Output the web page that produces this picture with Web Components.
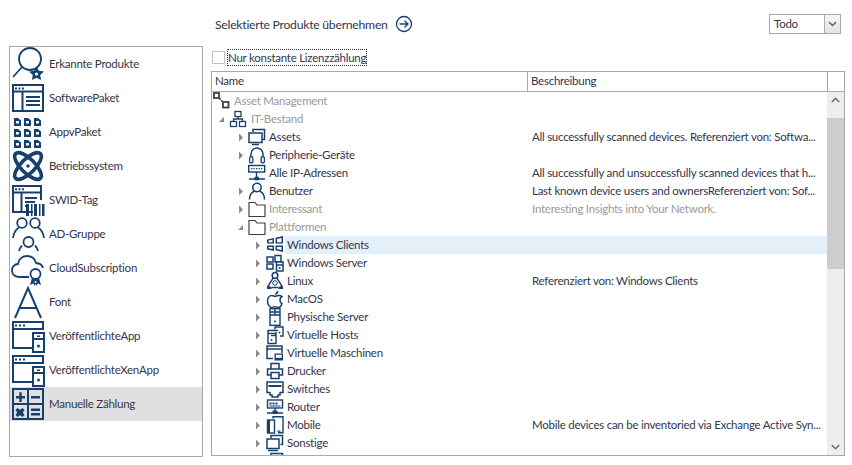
<!DOCTYPE html>
<html lang="de"><head><meta charset="utf-8"><title>Produkte</title>
<style>
html,body{margin:0;padding:0;background:#fff}
body{font:11.500px Lato,"Noto Sans",sans-serif;letter-spacing:-.25px;color:#33364a;width:852px;height:465px;overflow:hidden}
</style></head><body>
<x-app></x-app>
<script>
const s='fill="none" stroke="#17406e"';
const ICONS={
finder:`<g ${s} stroke-width="1.800"><circle cx="19" cy="12" r="11"/><path d="M11 20L2 30"/></g><path d="M25.500 19l2.300 4.700 5.200.7-3.800 3.600.9 5.100-4.600-2.400-4.600 2.400.9-5.100-3.800-3.600 5.200-.7z" fill="#17406e"/><circle cx="25.500" cy="27" r="1.600" fill="#fff"/>`,
pkg:`<g ${s} stroke-width="2"><rect x="2" y="4" width="30" height="26"/><path d="M2 10.500h30M11.500 10.500V30M15 16h14M15 20h14M15 24h14"/></g><path d="M4 6.500h2v2H4zM7.500 6.500h2v2h-2zM11 6.500h2v2h-2z" fill="#17406e"/>`,
appv:[3,13,23].map(x=>[3,14,25].map(y=>`<path d="M${x} ${y}h4l3 2.500v5.500h-7z" fill="#17406e"/><rect x="${x+2}" y="${y+3}" width="3" height="2.500" fill="#fff"/>`).join('')).join(''),
atom:`<g ${s} stroke-width="3.600"><ellipse cx="17" cy="17" rx="17.500" ry="7" transform="rotate(45 17 17)"/><ellipse cx="17" cy="17" rx="17.500" ry="7" transform="rotate(-45 17 17)"/></g><circle cx="17" cy="17" r="1.800" fill="#17406e"/>`,
swid:`<g ${s} stroke-width="2"><path d="M22 29H2V3h28v14M2 9.500h28M10.500 9.500V29M14 15h12M14 19h10M14 23h4"/></g><path d="M4 5.300h2v2H4zM7.500 5.300h2v2h-2zM11 5.300h2v2h-2z" fill="#17406e"/><path d="M15 21h3v12h-3zM20 21h1.500v12H20zM23 21h3v12h-3zM28 21h1.500v12H28zM31 21h2.500v12H31z" fill="#17406e"/>`,
group:`<g ${s} stroke-width="1.800"><circle cx="11" cy="6" r="4.800"/><circle cx="24" cy="6" r="4.800"/><circle cx="17.500" cy="25" r="5"/><path d="M2 21c.5-5 3-8.500 6-10.500M33 21c-.5-5-3-8.500-6-10.500M8 34c.5-2 1.500-4 3-5.500M27 34c-.5-2-1.500-4-3-5.500"/></g>`,
cloud:`<g ${s} stroke-width="1.800"><path d="M18 26H8C3 26 1 22.500 1 19.500 1 16 3.500 13 7 13c.8-5.500 5-8 9-8 5 0 8 3 9 7 4 .3 6.500 2.500 7 5"/><circle cx="24.500" cy="23" r="5"/></g><path d="M21 27l-2 7 3-1.500 2 2.500.5-3 .5 3 2-2.500 3 1.500-2-7z" fill="#17406e"/><circle cx="24.500" cy="31" r="1" fill="#fff"/>`,
font:`<path d="M4 33L17 3l13 30M9 23h16" ${s} stroke-width="2"/>`,
pub:`<g ${s} stroke-width="2"><path d="M22 29H2V3h30v8M2 10h30"/><rect x="22" y="14" width="11" height="19"/><path d="M22 20h11"/></g><path d="M4 5.500h2v2H4zM8 5.500h2v2H8zM12 5.500h2v2h-2z" fill="#17406e"/><circle cx="27.500" cy="27" r="1.500" fill="#17406e"/><path d="M26 16.500h3v1.500h-3z" fill="#17406e"/>`,
calc:`<g ${s} stroke-width="2"><rect x="2" y="2" width="30" height="30"/><path d="M17 2v30M2 17h30"/></g><path d="M5 9h9v2.400H5zM8.300 5.200h2.400v9.900H8.300zM20 9h9v2.400h-9zM20 21.500h9v2.400h-9zM20 26h9v2.400h-9z" fill="#17406e"/><path d="M6 21l2.500 1.700L11 21l2 2-1.700 2.500L13 28l-2 2-2.500-1.700L6 30l-2-2 1.700-2.500L4 23z" fill="#17406e" transform="translate(.5 0)"/>`,
net:`<g fill="none" stroke="#3f3f46" stroke-width="1.800"><rect x="2" y="1" width="5" height="5"/><rect x="11" y="10" width="5.500" height="5.500"/><path d="M7.500 6.500l3.500 3.500" stroke-dasharray="1.500 1"/></g>`,
tree:`<g ${s} stroke-width="1.300"><rect x="6" y="1.500" width="6" height="5"/><rect x="1.500" y="11.500" width="6" height="5"/><rect x="10.500" y="11.500" width="6" height="5"/><path d="M9 6.500v2.500M4.500 11.500V9h9v2.500"/></g>`,
assets:`<g ${s} stroke-width="1.500"><path d="M5 4V1.500h11.500v10H14"/><rect x="1" y="5" width="13" height="9.500"/><path d="M4 16.500h7"/></g>`,
head:`<g ${s}><path d="M3 10V8a6 6 0 0 1 12 0v2" stroke-width="1.500"/></g><rect x="1" y="10" width="4.500" height="7.500" rx="1.800" fill="#17406e"/><rect x="12.500" y="10" width="4.500" height="7.500" rx="1.800" fill="#17406e"/><rect x="2.300" y="11.500" width="1.900" height="4.500" fill="#fff"/><rect x="13.800" y="11.500" width="1.900" height="4.500" fill="#fff"/>`,
ip:`<g ${s} stroke-width="1.400"><rect x=".7" y="1.500" width="16" height="6.500"/><path d="M8.500 8v6M1 15h16"/></g><rect x="6.500" y="12.800" width="4.500" height="3.500" fill="#17406e"/><path d="M3 4h1.300v1.200H3zM5.500 4h1.300v1.200H5.500zM8 4h1.300v1.200H8zM10.500 4h1.300v1.200h-1.300zM13 4h1.300v1.200H13z" fill="#17406e"/>`,
user:`<g ${s} stroke-width="1.500"><circle cx="9" cy="5.500" r="4.200"/><path d="M1.500 17.500c0-4.500 2.500-7.500 5-8.500M16.500 17.500c0-4.500-2.500-7.500-5-8.500"/></g>`,
folder:`<path d="M1 16.500V2.500h6l2 2.500h8v11.500z" fill="none" stroke="#3f3f46" stroke-width="1.200"/>`,
win:`<g fill="#17406e"><path d="M1 3.500l7-1.500v5.500H1zM9.500 1.700L17 0v7.500H9.500zM1 9.500h7v5.500l-7-1.500zM9.500 9.500H17v6.500l-7.500-1.700z"/></g><path d="M2.500 4.600L6.500 3.700V6.200H2.500zM11 3L15.500 1.900V6.200H11zM2.500 11H6.500V13L2.500 12.300zM11 11H15.500v3L11 13z" fill="#fff"/>`,
wins:`<g ${s} stroke-width="1.500"><path d="M1 3h6v5H1zM1 10h6v5H1zM9 1.500h6v6.500H9z"/><rect x="10.500" y="8" width="6.500" height="9" fill="#fff"/><path d="M10.500 11h6.500"/></g><circle cx="13.700" cy="14" r="1" fill="#17406e"/>`,
linux:`<g ${s} stroke-width="1.500"><ellipse cx="9" cy="3.500" rx="2.800" ry="2.900"/><path d="M6.800 6C6.300 9 2.800 11 2.500 14.500M11.200 6c.5 3 4 5 4.300 8.500"/><path d="M5.500 15.500h7"/></g><path d="M1 13.500l4.500 1.500v2H1zM17 13.500L12.500 15v2H17z" fill="#17406e"/><circle cx="9" cy="11" r="2.300" fill="none" stroke="#17406e"/>`,
mac:`<path d="M12.200 5.500c-1.300 0-2.200.8-3.200.8s-1.900-.8-3.200-.8C3.800 5.500 1.500 7.300 1.500 11c0 3.500 2.400 6.500 4 6.500 1.100 0 1.900-.8 3.500-.8s2.400.8 3.500.8c1.400 0 3-2.300 3.500-4-2.500-1-3-5.500 0-7-.8-.7-2-1-3.300-1z" fill="none" stroke="#17406e" stroke-width="1.500"/><path d="M9 5c0-2 1.500-3.800 3.500-4.200C12.700 3 11 4.800 9 5z" fill="#17406e"/>`,
server:`<g ${s} stroke-width="1.400"><rect x="4" y=".7" width="10" height="16.600"/><path d="M4 4h10M4 7h10M9 .7V7"/></g><circle cx="9" cy="13.500" r="1" fill="#17406e"/>`,
vhost:`<g ${s} stroke-width="1.400"><path d="M9 3.500V1H17v9h-3"/><path d="M12 4.500H2v13h8V6"/><path d="M2 7.500h8"/><path d="M5 9.500H10"/></g><circle cx="5.500" cy="14" r="1" fill="#17406e"/><circle cx="13.500" cy="6.500" r="1" fill="#17406e"/>`,
vm:`<g ${s} stroke-width="1.500"><path d="M7 14.500H1V2h15v7M1 5h15"/></g><rect x="8.500" y="9.500" width="8.500" height="7" fill="#17406e"/><rect x="9.800" y="10.800" width="5.900" height="3" fill="#fff"/>`,
print:`<g ${s} stroke-width="1.500"><path d="M5 7V1.500h8V7M5 13H1.500V7h15v6H13M5 10.500h8v6H5z"/></g>`,
switch:`<path d="M1 2h16v10.500h-3V15h-2v2H6v-2H4v-2.500H1z" ${s} stroke-width="1.500"/><path d="M2.500 5h13v2h-13z" fill="#17406e"/>`,
router:`<g ${s} stroke-width="1.400"><rect x="1.500" y="2" width="15" height="8"/><path d="M9 10v5M1 15h16"/></g><rect x="6.500" y="12.500" width="5" height="3.500" fill="#17406e"/><path d="M3.500 4.500h2v2h-2zM6.500 4.500h2v2h-2zM9.500 4.500h2v2h-2zM3.500 7.500H14.500v1H3.500z" fill="#17406e"/>`,
mobile:`<g ${s} stroke-width="1.400"><path d="M7 2.500V.8h10v16h-5"/><rect x="1.500" y="4" width="7" height="13"/></g><path d="M2 4h2v13H2zM11.500 14.500h3v1.200h-3z" fill="#17406e"/>`,
other:`<g ${s} stroke-width="1.500"><path d="M5 4V1.500h11.500v9h-2"/><rect x="1" y="5" width="12" height="9.500"/><path d="M2 16.500h10"/></g>`
};
class XIcon extends HTMLElement{connectedCallback(){
 const n=+this.getAttribute('size')||18;
 const r=this.attachShadow({mode:'open'});
 r.innerHTML=`<style>:host{display:block;flex:none;width:${n}px;height:${n}px}svg{display:block;overflow:visible}</style><svg xmlns="http://www.w3.org/2000/svg" width="${n}" height="${n}" viewBox="0 0 ${n} ${n}">${ICONS[this.getAttribute('name')]||''}</svg>`;
}}
customElements.define('x-icon',XIcon);

class XSideItem extends HTMLElement{connectedCallback(){
 const r=this.attachShadow({mode:'open'});
 r.innerHTML=`<style>:host{display:flex;align-items:center;height:34px;padding-left:1px;gap:4px}
 :host([selected]){background:#e0e0e0}
 span{white-space:nowrap;margin-bottom:2px}</style><x-icon size="34" name="${this.getAttribute('icon')}"></x-icon><span><slot></slot></span>`;
}}
customElements.define('x-side-item',XSideItem);

class XRow extends HTMLElement{connectedCallback(){
 const lvl=+this.getAttribute('level')||0,arrow=this.getAttribute('arrow')||'',icon=this.getAttribute('icon'),desc=this.getAttribute('desc')||'';
 const r=this.attachShadow({mode:'open'});
 const ind=[0,4.5,24,41][lvl],mi=[0,3.5,3,3.5][lvl],ml=[4,4,3,3.5][lvl];
 const ar=arrow==='open'?`<svg width="7" height="7" viewBox="0 0 7 7"><path d="M6 1v5H1z" fill="#8a8a8a"/></svg>`:arrow==='closed'?`<svg width="6" height="9" viewBox="0 0 6 9"><path d="M1 .5l4 4-4 4z" fill="#8a8a8a"/></svg>`:'';
 r.innerHTML=`<style>:host{display:flex;height:18px;align-items:center;white-space:nowrap}
 .name{width:316px;flex:none;display:flex;align-items:center;height:18px;padding-left:${ind}px;box-sizing:border-box}
 .ar{width:${lvl?9:0}px;flex:none;display:flex;align-items:center;justify-content:center;margin-right:${mi}px}
 .lbl{margin-left:${ml}px;height:18px;line-height:18px;flex:1}
 .desc{flex:none;width:299px;padding-left:4px;overflow:hidden;box-sizing:border-box;line-height:18px;height:18px}
 :host([dim]){color:#9a9a9a}
 :host([sel]){background:linear-gradient(to right,transparent 73px,#e3eff9 73px)}
 </style><div class="name"><div class="ar">${ar}</div><x-icon name="${icon}" size="18"></x-icon><span class="lbl"><slot></slot></span></div><div class="desc">${desc}</div>`;
}}
customElements.define('x-row',XRow);

class XTree extends HTMLElement{connectedCallback(){
 const r=this.attachShadow({mode:'open'});
 r.innerHTML=`<style>:host{display:flex;flex-direction:column;border:1px solid #a9a9a9;box-sizing:border-box;width:634px;flex:1;margin-bottom:9px;overflow:hidden}
 .head{display:flex;height:20px;box-sizing:border-box;flex:none;border-bottom:1px solid #a9a9a9;align-items:center}
 .c1{width:316px;flex:none;padding-left:3px;box-sizing:border-box;height:100%;line-height:18px;border-right:1px solid #a9a9a9}
 .c2{flex:1;padding-left:3px;height:100%;line-height:18px}
 .c3{width:16px;flex:none;height:100%;border-left:1px solid #a9a9a9}
 .body{flex:1;display:flex;min-height:0}
 .rows{width:615px;flex:none;overflow:hidden}
 .sb{flex:1;background:#eee;display:flex;flex-direction:column;align-items:center}
 .up,.dn{height:16px;flex:none;display:flex;align-items:center;justify-content:center}
 .pad{height:10px;flex:none}.thumb{height:151px;flex:none;width:100%;background:#cdcdcd}.rest{flex:1}
 </style><div class="head"><div class="c1">Name</div><div class="c2">Beschreibung</div><div class="c3"></div></div>
 <div class="body"><div class="rows"><slot></slot></div><div class="sb"><div class="up"><svg width="9" height="6"><path d="M.8 5L4.500 1.300 8.200 5" fill="none" stroke="#6e6e6e" stroke-width="1.600"/></svg></div><div class="pad"></div><div class="thumb"></div><div class="rest"></div><div class="dn"><svg width="9" height="6"><path d="M.8 1L4.500 4.700 8.200 1" fill="none" stroke="#6e6e6e" stroke-width="1.600"/></svg></div></div></div>`;
}}
customElements.define('x-tree',XTree);

class XCombo extends HTMLElement{connectedCallback(){
 const r=this.attachShadow({mode:'open'});
 r.innerHTML=`<style>:host{display:flex;width:72px;height:20px;box-sizing:border-box;border:1px solid #a9a9a9}
 .t{flex:1;padding-left:4px;line-height:18px;border-right:1px solid #a9a9a9}
 .b{width:15px;background:linear-gradient(#f6f6f6,#e4e4e4);display:flex;align-items:center;justify-content:center}</style><div class="t"><slot></slot></div><div class="b"><svg width="9" height="6"><path d="M1 1.200L4.500 4.500 8 1.200" fill="none" stroke="#666" stroke-width="1.600"/></svg></div>`;
}}
customElements.define('x-combo',XCombo);

class XApp extends HTMLElement{connectedCallback(){
 const r=this.attachShadow({mode:'open'});
 const side=[['finder','Erkannte Produkte'],['pkg','SoftwarePaket'],['appv','AppvPaket'],['atom','Betriebssystem'],['swid','SWID-Tag'],['group','AD-Gruppe'],['cloud','CloudSubscription'],['font','Font'],['pub','VeröffentlichteApp'],['pub','VeröffentlichteXenApp'],['calc','Manuelle Zählung']];
 const rows=[
 [0,'','net','Asset Management','',1],
 [1,'open','tree','IT-Bestand','',1],
 [2,'closed','assets','Assets','All successfully scanned devices. Referenziert von: Softwa...'],
 [2,'closed','head','Peripherie-Geräte',''],
 [2,'','ip','Alle IP-Adressen','All successfully and unsuccessfully scanned devices that h...'],
 [2,'closed','user','Benutzer','Last known device users and ownersReferenziert von: Sof...'],
 [2,'closed','folder','Interessant','Interesting Insights into Your Network.',1],
 [2,'open','folder','Plattformen','',1],
 [3,'closed','win','Windows Clients','',0,1],
 [3,'closed','wins','Windows Server',''],
 [3,'closed','linux','Linux','Referenziert von: Windows Clients'],
 [3,'closed','mac','MacOS',''],
 [3,'closed','server','Physische Server',''],
 [3,'closed','vhost','Virtuelle Hosts',''],
 [3,'closed','vm','Virtuelle Maschinen',''],
 [3,'closed','print','Drucker',''],
 [3,'closed','switch','Switches',''],
 [3,'closed','router','Router',''],
 [3,'closed','mobile','Mobile','Mobile devices can be inventoried via Exchange Active Syn...'],
 [3,'closed','other','Sonstige',''],
 [3,'closed','other','','']];
 r.innerHTML=`<style>:host{display:flex;width:852px;height:465px;box-sizing:border-box;padding-left:9px}
 .left{width:194px;height:411px;margin-top:46px;border:1px solid #a9a9a9;box-sizing:border-box;flex:none}
 .right{margin-left:8px;flex:1;display:flex;flex-direction:column;min-width:0}
 .top{height:49px;display:flex;align-items:flex-start;flex:none}
 .title{margin:15px 0 0 4px;display:flex;align-items:center;gap:7px;height:18px;font-size:12.200px;white-space:nowrap;flex:none}
 x-combo{margin:14px 11px 0 auto}
 .chk{display:flex;height:17px;align-items:center;gap:2px;margin-left:1px;flex:none}
 .box{width:13px;height:13px;border:1px solid #c2c2c2;box-sizing:border-box}
 .lab{outline:1px dotted #333;outline-offset:-1px;padding:0 1px;line-height:17px;height:17px;white-space:nowrap}
 x-tree{margin-top:5px}
 </style>
 <div class="left">${side.map((a,i)=>`<x-side-item icon="${a[0]}"${i==10?' selected':''}>${a[1]}</x-side-item>`).join('')}</div>
 <div class="right"><div class="top"><div class="title"><span>Selektierte Produkte übernehmen</span><svg width="18" height="18" viewBox="0 0 18 18" fill="none" stroke="#17406e" stroke-width="1.300"><circle cx="9" cy="9" r="7.500"/><path d="M4.500 9h8.500M9.500 5.500L13 9l-3.500 3.500"/></svg></div><x-combo>Todo</x-combo></div>
 <div class="chk"><div class="box"></div><div class="lab">Nur konstante Lizenzzählung</div></div>
 <x-tree>${rows.map(a=>`<x-row level="${a[0]}" arrow="${a[1]}" icon="${a[2]}" desc="${a[4]}"${a[5]?' dim':''}${a[6]?' sel':''}>${a[3]}</x-row>`).join('')}</x-tree></div>`;
}}
customElements.define('x-app',XApp);
</script></body></html>
